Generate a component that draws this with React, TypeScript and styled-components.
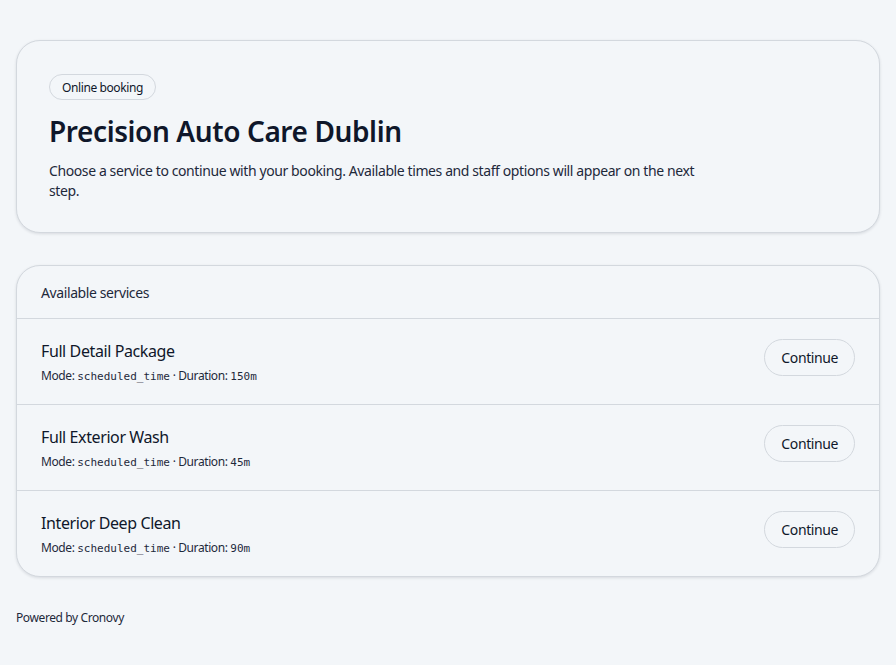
import React from "react";
import styled, { createGlobalStyle } from "styled-components";

const Global = createGlobalStyle`
  html, body { margin: 0; padding: 0; background: #f3f6f9; }
  body {
    font-family: "Noto Sans", "Open Sans", sans-serif;
    color: #0f172a;
    letter-spacing: -0.025em;
  }
  * { box-sizing: border-box; }
`;

const Page = styled.div`
  padding: 40px 16px 32px;
  display: flex;
  flex-direction: column;
  gap: 32px;
`;

const Card = styled.section`
  border: 1px solid #d3d8de;
  border-radius: 24px;
  background: #f3f6f9;
  box-shadow: 0 1px 3px rgba(15, 23, 42, 0.12);
  overflow: hidden;
`;

const Hero = styled(Card)`
  padding: 33px 32px 31px;
`;

const Badge = styled.span`
  display: inline-flex;
  align-items: center;
  height: 26px;
  padding: 0 12px;
  border: 1px solid #d3d8de;
  border-radius: 999px;
  font-size: 12px;
  color: #0f172a;
`;

const Title = styled.h1`
  margin: 13px 0 12px;
  font-size: 28px;
  line-height: 36px;
  font-weight: 600;
  color: #0f172a;
`;

const Lead = styled.p`
  margin: 0;
  font-size: 14px;
  line-height: 20px;
  color: #1e293b;
  max-width: 672px;
`;

const ListHeader = styled.div`
  height: 53px;
  padding: 0 24px;
  display: flex;
  align-items: center;
  font-size: 14px;
  color: #1e293b;
  border-bottom: 1px solid #d3d8de;
`;

const Row = styled.div<{ $last?: boolean }>`
  padding: 21px 24px 19px;
  display: flex;
  align-items: flex-start;
  justify-content: space-between;
  border-bottom: ${(p) => (p.$last ? "none" : "1px solid #d3d8de")};
`;

const Info = styled.div`
  display: flex;
  flex-direction: column;
  gap: 5px;
`;

const Name = styled.div`
  font-size: 16px;
  line-height: 22px;
  color: #0f172a;
`;

const Meta = styled.div`
  height: 18px;
  font-size: 12px;
  line-height: 18px;
  color: #1e293b;
`;

const Code = styled.code`
  font-family: "DejaVu Sans Mono", "Liberation Mono", monospace;
  font-size: 11px;
  line-height: 1;
  letter-spacing: 0;
`;

const Button = styled.button`
  margin-top: -1px;
  height: 37px;
  padding: 0 16px;
  border: 1px solid #d3d8de;
  border-radius: 999px;
  background: #f3f6f9;
  font-family: inherit;
  letter-spacing: inherit;
  font-size: 14px;
  color: #0f172a;
  cursor: pointer;
`;

const Footer = styled.div`
  font-size: 12px;
  color: #1e293b;
`;

const services = [
  { name: "Full Detail Package", duration: "150m" },
  { name: "Full Exterior Wash", duration: "45m" },
  { name: "Interior Deep Clean", duration: "90m" },
];

export default function App() {
  return (
    <>
      <Global />
      <Page>
        <Hero>
          <Badge>Online booking</Badge>
          <Title>Precision Auto Care Dublin</Title>
          <Lead>
            Choose a service to continue with your booking. Available times and staff options will appear on the next step.
          </Lead>
        </Hero>
        <Card>
          <ListHeader>Available services</ListHeader>
          {services.map((s, i) => (
            <Row key={s.name} $last={i === services.length - 1}>
              <Info>
                <Name>{s.name}</Name>
                <Meta>
                  Mode: <Code>scheduled_time</Code> · Duration: <Code>{s.duration}</Code>
                </Meta>
              </Info>
              <Button>Continue</Button>
            </Row>
          ))}
        </Card>
        <Footer>Powered by Cronovy</Footer>
      </Page>
    </>
  );
}
